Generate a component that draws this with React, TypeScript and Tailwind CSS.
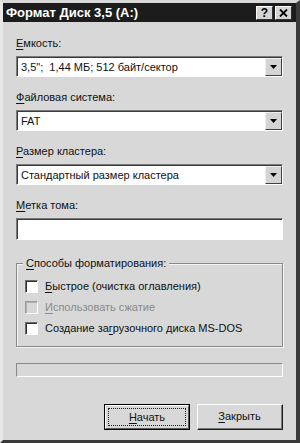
import React from "react";

const sunken =
  "border-t border-l border-b border-r border-t-[#7a7a7a] border-l-[#7a7a7a] border-b-white border-r-white";

function U({ children }: { children: React.ReactNode }) {
  return <span className="underline underline-offset-[2px] decoration-1">{children}</span>;
}

function Combo({ text }: { text: string }) {
  return (
    <div className={`h-[21px] flex bg-white ${sunken}`}>
      <div className="flex-1 border-t border-l border-t-[#3a3a3a] border-l-[#3a3a3a] flex items-center pl-[3px] text-[11px] leading-none text-[#111] whitespace-pre">
        {text}
      </div>
      <div className="border-t border-t-[#3a3a3a] bg-white">
        <div className="w-[17px] h-full bg-[#d4d4d4] border-t border-l border-t-[#f0f0f0] border-l-[#f0f0f0] border-r border-b border-r-[#404040] border-b-[#404040] flex items-center justify-center">
          <svg width="7" height="4" viewBox="0 0 7 4">
            <path d="M0 0H7L3.5 4Z" fill="#000" />
          </svg>
        </div>
      </div>
    </div>
  );
}

function Check({ label, disabled }: { label: React.ReactNode; disabled?: boolean }) {
  return (
    <div className="flex items-center h-[13px]">
      <div
        className={`w-[13px] h-[13px] shrink-0 border-t border-l border-b border-r ${
          disabled ? "border-t-[#9a9a9a] border-l-[#9a9a9a] bg-[#d8d8d8]" : "border-t-[#6a6a6a] border-l-[#6a6a6a] bg-white"
        } border-b-white border-r-white`}
      >
        <div
          className={`w-full h-full border-t border-l ${disabled ? "border-t-[#b0b0b0] border-l-[#b0b0b0]" : "border-t-[#303030] border-l-[#303030]"}`}
        />
      </div>
      <span className={`ml-[7px] text-[11px] leading-none ${disabled ? "text-[#8a8a8a]" : "text-[#111]"}`}>{label}</span>
    </div>
  );
}

export default function App() {
  return (
    <div
      className="w-[300px] h-[443px] bg-[#d8d8d8] flex flex-col border-t-[3px] border-l-[3px] border-r-[4px] border-b-[3px] border-t-[#d8d8d8] border-l-[#e8e8e8] border-r-[#3a3a3a] border-b-[#3a3a3a]"
      style={{ fontFamily: '"Liberation Sans", Arial, sans-serif' }}
    >
      <div className="h-[19px] bg-[#1c1c1c] flex items-center justify-between pl-[3px] pr-[4px]">
        <span className="text-white font-bold text-[13px] leading-none">Формат Диск 3,5 (A:)</span>
        <div className="flex gap-[2px]">
          <div className="w-[17px] h-[14px] bg-[#d4d4d4] border-t border-l border-t-white border-l-white border-r border-b border-r-[#303030] border-b-[#303030] flex items-center justify-center text-[12px] font-bold leading-none text-black">
            ?
          </div>
          <div className="w-[17px] h-[14px] bg-[#d4d4d4] border-t border-l border-t-white border-l-white border-r border-b border-r-[#303030] border-b-[#303030] flex items-center justify-center">
            <svg width="9" height="8" viewBox="0 0 9 8">
              <path d="M1 0.5L8 7.5M8 0.5L1 7.5" stroke="#000" strokeWidth="1.8" />
            </svg>
          </div>
        </div>
      </div>

      <div className="flex flex-col pl-[13px] pr-[13px]">
        <div className="mt-[15px] text-[11px] leading-[13px] text-[#111]">
          <U>Е</U>мкость:
        </div>
        <div className="mt-[6px]">
          <Combo text={'3,5";  1,44 МБ; 512 байт/сектор'} />
        </div>

        <div className="mt-[14px] text-[11px] leading-[13px] text-[#111]">
          <U>Ф</U>айловая система:
        </div>
        <div className="mt-[6px]">
          <Combo text="FAT" />
        </div>

        <div className="mt-[14px] text-[11px] leading-[13px] text-[#111]">
          <U>Р</U>азмер кластера:
        </div>
        <div className="mt-[6px]">
          <Combo text="Стандартный размер кластера" />
        </div>

        <div className="mt-[14px] text-[11px] leading-[13px] text-[#111]">
          <U>М</U>етка тома:
        </div>
        <div className={`mt-[6px] h-[22px] bg-white ${sunken}`}>
          <div className="w-full h-full border-t border-l border-t-[#3a3a3a] border-l-[#3a3a3a]" />
        </div>

        <div className="mt-[23px] relative h-[84px] border border-[#8a8a8a] shadow-[inset_1px_1px_0_#f4f4f4,1px_1px_0_#f4f4f4]">
          <div className="absolute -top-[7px] left-[6px] bg-[#d8d8d8] px-[3px] text-[11px] leading-[13px] text-[#111]">
            <U>С</U>пособы форматирования:
          </div>
          <div className="flex flex-col gap-[8px] pl-[8px] pt-[16px]">
            <Check label={<><U>Б</U>ыстрое (очистка оглавления)</>} />
            <Check disabled label={<><U>И</U>спользовать сжатие</>} />
            <Check label={<>Создание за<U>г</U>рузочного диска MS-DOS</>} />
          </div>
        </div>

        <div className="mt-[16px] h-[14px] border-t border-l border-t-[#8a8a8a] border-l-[#8a8a8a] border-b border-r border-b-white border-r-white bg-[#d8d8d8]" />

        <div className="mt-[27px] flex justify-end gap-[7px]">
          <div className="w-[86px] h-[26px] border border-black">
            <div className="w-full h-full bg-[#d8d8d8] border-t border-l border-t-white border-l-white border-r border-b border-r-[#5a5a5a] border-b-[#5a5a5a] p-[2px]">
              <div className="w-full h-full border border-dotted border-[#222] flex items-center justify-center text-[11px] leading-none text-[#111]">
                <U>Н</U>ачать
              </div>
            </div>
          </div>
          <div className="w-[86px] h-[26px] bg-[#d8d8d8] border-t border-l border-t-white border-l-white border-r border-b border-r-[#1a1a1a] border-b-[#1a1a1a]">
            <div className="w-full h-full border-r border-b border-r-[#7a7a7a] border-b-[#7a7a7a] flex items-center justify-center text-[11px] leading-none text-[#111]">
              <U>З</U>акрыть
            </div>
          </div>
        </div>
      </div>
    </div>
  );
}
